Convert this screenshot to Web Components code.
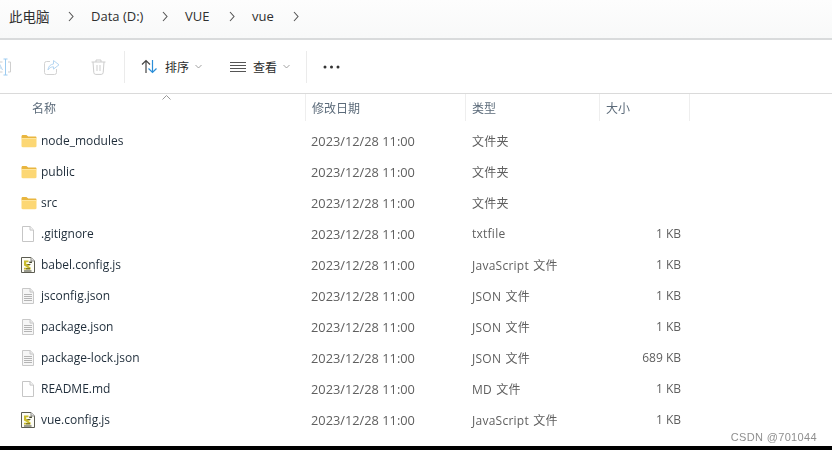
<!DOCTYPE html>
<html>
<head>
<meta charset="utf-8">
<style>
  html, body { margin: 0; padding: 0; background: #fff; }
  body {
    width: 832px; height: 450px; overflow: hidden;
    font-family: "Open Sans", "Noto Sans CJK SC", sans-serif;
  }
</style>
</head>
<body>
<explorer-window>
  <address-bar>
    <path-crumb style="--w:59px;font-size:13.500px">此电脑</path-crumb>
    <path-crumb style="--w:71px">Data (D:)</path-crumb>
    <path-crumb style="--w:44px">VUE</path-crumb>
    <path-crumb style="--w:41px">vue</path-crumb>
  </address-bar>
  <tool-bar></tool-bar>
  <file-header></file-header>
  <file-row icon="folder" name="node_modules" date="2023/12/28 11:00" type="文件夹"></file-row>
  <file-row icon="folder" name="public" date="2023/12/28 11:00" type="文件夹"></file-row>
  <file-row icon="folder" name="src" date="2023/12/28 11:00" type="文件夹"></file-row>
  <file-row icon="blank" name=".gitignore" date="2023/12/28 11:00" type="txtfile" size="1 KB"></file-row>
  <file-row icon="js" name="babel.config.js" date="2023/12/28 11:00" type="JavaScript 文件" size="1 KB"></file-row>
  <file-row icon="json" name="jsconfig.json" date="2023/12/28 11:00" type="JSON 文件" size="1 KB"></file-row>
  <file-row icon="json" name="package.json" date="2023/12/28 11:00" type="JSON 文件" size="1 KB"></file-row>
  <file-row icon="json" name="package-lock.json" date="2023/12/28 11:00" type="JSON 文件" size="689 KB"></file-row>
  <file-row icon="blank" name="README.md" date="2023/12/28 11:00" type="MD 文件" size="1 KB"></file-row>
  <file-row icon="js" name="vue.config.js" date="2023/12/28 11:00" type="JavaScript 文件" size="1 KB"></file-row>
</explorer-window>

<script>
// small helper, every element gets an open shadow root from a string
function shadow(el, html) {
  el.attachShadow({ mode: 'open' }).innerHTML = html;
}

const ICONS = {
  folder: `<svg width="16" height="14" viewBox="0 0 16 14">
    <path d="M.5 2.500C.5 1.600 1 1 1.800 1h3.600l1.800 1.600h7.200c.6 0 1.100.5 1.100 1.100V4H.5z" fill="#e9b63f"/>
    <path d="M.5 4h15v8c0 .7-.5 1.200-1.200 1.200H1.700C1 13.200.5 12.700.5 12z" fill="#fcd774"/>
    <path d="M.5 4h15v.8H.5z" fill="#fee9a8"/></svg>`,
  blank: `<svg width="14" height="16" viewBox="0 0 14 16">
    <path d="M1.500.5h7.600l3.400 3.400v11.600h-11z" fill="#fff" stroke="#c6c6c6"/>
    <path d="M9 .5v3.600h3.500" fill="#f2f2f2" stroke="#c6c6c6"/></svg>`,
  json: `<svg width="14" height="16" viewBox="0 0 14 16">
    <path d="M1.500.5h7.600l3.400 3.400v11.600h-11z" fill="#f6f6f6" stroke="#c8c8c8"/>
    <path d="M9 .5v3.600h3.500" fill="#e8e8e8" stroke="#c8c8c8"/>
    <path d="M3 6.500h8M3 8.500h8M3 10.500h8M3 12.500h8" stroke="#b4b4b4"/></svg>`,
  js: `<svg width="14" height="16" viewBox="0 0 14 16">
    <path d="M.5.5h9.500l3.500 3.500v11.500H.5z" fill="#fdfdf6" stroke="#5c5c52"/>
    <path d="M10 .5v3.500h3.500" fill="#e4e4e4" stroke="#8b8b84"/>
    <path d="M3 3.500h4.500v1.800H5.200v1.800h3.600v1.600H6.900l2.700 1.700v2.100H3v-1.800h3.900L3 8.400V6.800z" fill="#c9bb2c"/>
    <path d="M8.300 4.500h2.600v1.500H8.300zM3 13.600h7.500v.8H3zM6.500 7.300h3v.7h-3zM5 11.500h4v.8H5z" fill="#3d3f2a"/></svg>`
};

class ExplorerWindow extends HTMLElement {
  constructor() {
    super();
    shadow(this, `<style>
      :host { display: flex; flex-direction: column; height: 450px; position: relative; background: #fff; }
      .list { flex: 1; filter: blur(.3px); }
      .bottom { height: 4px; background: #000; flex: none; }
      .mark {
        position: absolute; right: 15px; bottom: 7px;
        font: 11px "Liberation Sans", sans-serif; letter-spacing: .35px; color: #8f8f8f;
      }
    </style>
    <div class="list"><slot></slot></div>
    <div class="bottom"></div>
    <div class="mark">CSDN @701044</div>`);
  }
}

class AddressBar extends HTMLElement {
  constructor() {
    super();
    shadow(this, `<style>
      :host {
        display: flex; align-items: center; height: 40px; padding: 0 0 6px 9px; box-sizing: border-box;
        background: linear-gradient(#fdfdfd, #f8f9f9);
        border-bottom: 2px solid #d9dbdc;
        font-size: 13px; color: #2f2f2f;
      }
    </style>
    <slot></slot>`);
  }
}

class PathCrumb extends HTMLElement {
  constructor() {
    super();
    shadow(this, `<style>
      :host { display: flex; align-items: center; flex: none; }
      .text { width: var(--w); }
      svg { flex: none; width: 6px; height: 11px; margin-right: 17px; }
    </style>
    <div class="text"><slot></slot></div>
    <svg viewBox="0 0 6 11"><path d="M1 1l4 4.500L1 10" fill="none" stroke="#555" stroke-width="1.100"/></svg>`);
  }
}

class ToolBar extends HTMLElement {
  constructor() {
    super();
    shadow(this, `<style>
      :host {
        display: flex; align-items: center; height: 54px; box-sizing: border-box; overflow: hidden;
        border-bottom: 1px solid #dadada; background: #fff;
        font-size: 12px; color: #2b2b2b;
      }
      svg { flex: none; display: block; }
      .sep { width: 1px; height: 32px; background: #ebebeb; flex: none; }
      .btn { display: flex; align-items: center; flex: none; }
      .lbl { margin-left: 7px; }
      .caret { margin-left: 6px; }
    </style>
    <svg style="margin-left:-6px" width="17" height="18" viewBox="0 0 17 18" fill="none">
      <path d="M8.500 4H1.500v10h7M14 4h2.500v10H14" stroke="#cfcfcf"/>
      <path d="M1.500 12l3.500-7 3.500 7M3 10h4" stroke="#b5d4ee"/>
      <path d="M9.500 1h4M9.500 17h4M11.500 1v16" stroke="#9ccbf0"/></svg>
    <svg style="margin-left:33px" width="16" height="16" viewBox="0 0 16 16" fill="none">
      <path d="M6 2.500H2.500a2 2 0 0 0-2 2v9a2 2 0 0 0 2 2h8a2 2 0 0 0 2-2V10" stroke="#d2d2d2"/>
      <path d="M9.500 1.500l5.500 4.300-5.500 4.300V7.800C7 7.800 5 9 4 11c.2-3.600 2.500-5.700 5.500-6z" stroke="#b5d6f2"/></svg>
    <svg style="margin-left:31px" width="15" height="16" viewBox="0 0 15 16" fill="none" stroke="#cdcdcd">
      <path d="M.5 3h14M5 3V1h5v2M2 3l.8 10.500a2 2 0 0 0 2 1.900h5.400a2 2 0 0 0 2-1.900L13 3M6 6v6M9 6v6"/></svg>
    <div class="sep" style="margin-left:18px"></div>
    <div class="btn" style="margin-left:16px">
      <svg width="17" height="15" viewBox="0 0 17 15" fill="none" stroke-width="1.200">
        <path d="M5 14V1.500M1 5.500l4-4 4 4" stroke="#444"/><path d="M11.500 1v12.500M7.500 9.500l4 4 4-4" stroke="#2b8ed8"/></svg>
      <span class="lbl">排序</span>
      <svg class="caret" width="7" height="5" viewBox="0 0 7 5"><path d="M.5 1l3 3 3-3" fill="none" stroke="#8a8a8a" stroke-width=".8"/></svg>
    </div>
    <div class="btn" style="margin-left:28px">
      <svg width="16" height="10" viewBox="0 0 16 10" fill="none" stroke="#555">
        <path d="M0 .5h16M0 3.500h16M0 6.500h16M0 9.500h16"/></svg>
      <span class="lbl">查看</span>
      <svg class="caret" width="7" height="5" viewBox="0 0 7 5"><path d="M.5 1l3 3 3-3" fill="none" stroke="#8a8a8a" stroke-width=".8"/></svg>
    </div>
    <div class="sep" style="margin-left:16px"></div>
    <svg style="margin-left:16px" width="17" height="4" viewBox="0 0 17 4" fill="#333">
      <circle cx="2" cy="2" r="1.500"/><circle cx="8.500" cy="2" r="1.500"/><circle cx="15" cy="2" r="1.500"/></svg>`);
  }
}

class FileHeader extends HTMLElement {
  constructor() {
    super();
    shadow(this, `<style>
      :host {
        display: grid; grid-template-columns: 306px 160px 134px 90px; height: 27px; margin-bottom: 4px;
        position: relative; font-size: 12px; color: #5c6b7a;
      }
      div { display: flex; align-items: center; padding-left: 6px; border-right: 1px solid #eeeeee; }
      .first { padding-left: 32px; }
      svg { position: absolute; left: 162px; top: 1px; }
    </style>
    <div class="first">名称</div><div>修改日期</div><div>类型</div><div>大小</div>
    <svg width="9" height="5" viewBox="0 0 9 5"><path d="M.5 4.500l4-4 4 4" fill="none" stroke="#999"/></svg>`);
  }
}

class FileRow extends HTMLElement {
  constructor() {
    super();
    const a = n => this.getAttribute(n) || '';
    shadow(this, `<style>
      :host {
        display: grid; grid-template-columns: 305px 160px 134px 82px; height: 31px; align-items: center;
        font-size: 12px; color: #5f5f5f;
      }
      .name { display: flex; align-items: center; padding-left: 21px; color: #1f2d3a; }
      .ic { width: 20px; display: flex; }
      .date { padding-left: 6px; font-size: 12.800px; }
      .type { padding-left: 7px; word-spacing: 1px; letter-spacing: .25px; }
      .size { text-align: right; }
    </style>
    <div class="name"><span class="ic">${ICONS[a('icon')]}</span>${a('name')}</div>
    <div class="date">${a('date')}</div>
    <div class="type">${a('type')}</div>
    <div class="size">${a('size')}</div>`);
  }
}

customElements.define('explorer-window', ExplorerWindow);
customElements.define('address-bar', AddressBar);
customElements.define('path-crumb', PathCrumb);
customElements.define('tool-bar', ToolBar);
customElements.define('file-header', FileHeader);
customElements.define('file-row', FileRow);
</script>
</body>
</html>
